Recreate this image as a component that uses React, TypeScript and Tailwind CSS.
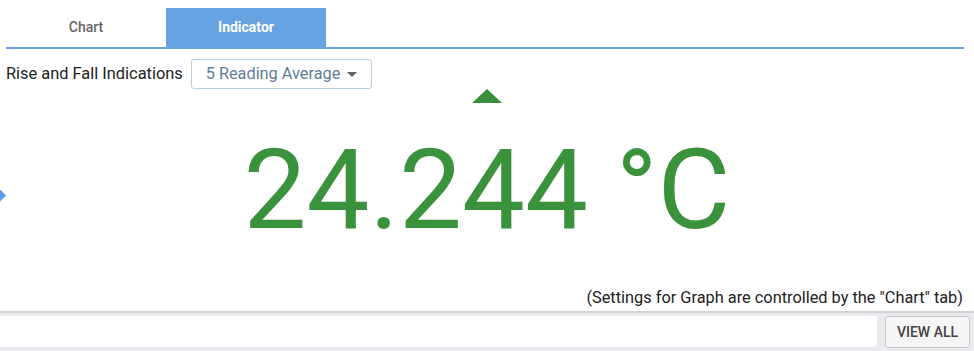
import React from "react";

export default function App() {
  return (
    <div className="relative w-[974px] h-[351px] overflow-hidden bg-white font-['Roboto',sans-serif]">
      {/* Tabs */}
      <div className="pt-2 pl-[6px] pr-[10px]">
        <div className="flex h-[41px] border-b-2 border-[#6aa3df]">
          <div className="w-[160px] flex items-center justify-center text-[14px] font-medium text-[#666]">
            Chart
          </div>
          <div className="w-[160px] flex items-center justify-center bg-[#67a3e3] text-[14px] font-bold text-white">
            Indicator
          </div>
        </div>
      </div>

      {/* Rise & Fall row */}
      <div className="flex items-center pl-[6px] mt-[10px] h-[30px]">
        <span className="text-[16.4px] text-[#222]">Rise and Fall Indications</span>
        <div className="ml-[8px] flex items-center h-[30px] w-[181px] border border-[#b9cde0] rounded-[3px] pl-[14px] pr-[14px] justify-between">
          <span className="text-[16.3px] text-[#5f7c98]">5 Reading Average</span>
          <span className="w-0 h-0 border-l-[5px] border-r-[5px] border-t-[5px] border-l-transparent border-r-transparent border-t-[#666]" />
        </div>
      </div>

      {/* Indicator */}
      <div className="flex flex-col items-center">
        <div className="w-0 h-0 border-l-[15px] border-r-[15px] border-b-[14px] border-l-transparent border-r-transparent border-b-[#3a8f3b]" />
        <div className="mt-[31px] text-[112px] leading-[112px] text-[#3b923d] whitespace-nowrap">
          24.244 °C
        </div>
      </div>

      {/* Left diamond */}
      <div className="absolute left-[-12px] top-[188px] w-[15px] h-[15px] rotate-45 bg-[#5b9be0]" />

      {/* Footer note */}
      <div className="absolute right-[11px] top-[287px] text-[16.35px] leading-[22px] text-[#222]">
        (Settings for Graph are controlled by the "Chart" tab)
      </div>

      {/* Bottom bar */}
      <div className="absolute left-0 right-0 top-[311px] h-[40px] bg-[#e9e9ee] border-t-2 border-[#d2d2d6] flex items-start pt-[3px]">
        <div className="w-[877px] h-[31px] bg-white rounded-r-[3px]" />
        <div className="ml-[8px] w-[85px] h-[32px] bg-[#f5f5f5] border border-[#cacaca] rounded-[3px] flex items-center justify-center text-[14px] font-medium text-[#444]">
          VIEW ALL
        </div>
      </div>
    </div>
  );
}
